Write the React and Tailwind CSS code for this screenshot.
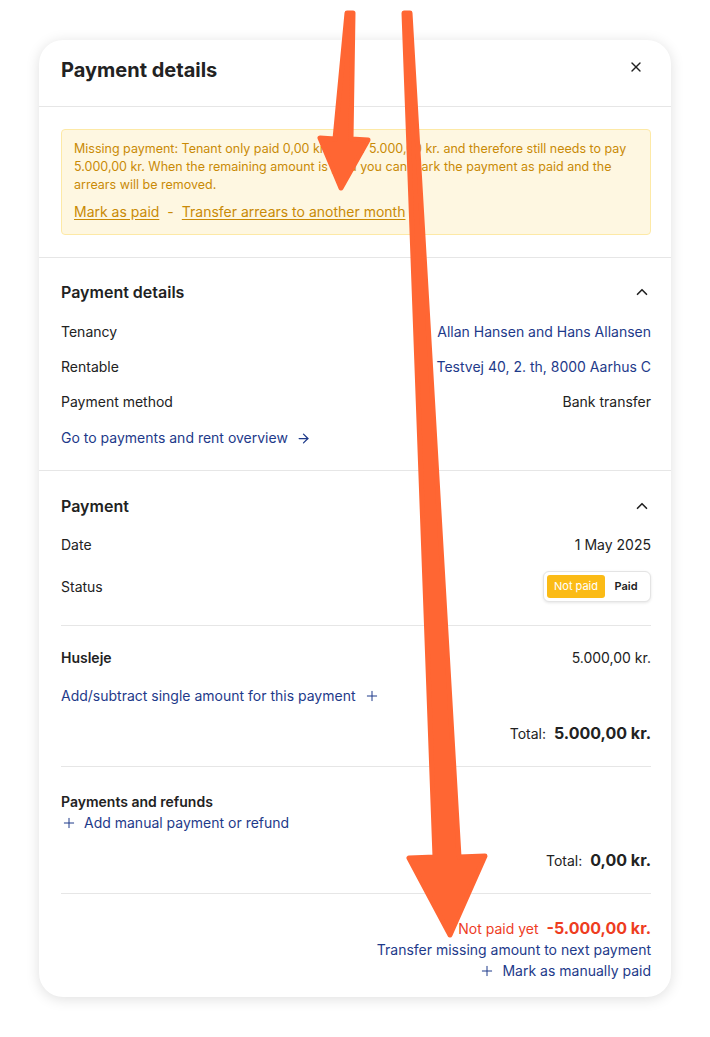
import React from 'react';
import { X, ChevronUp, ArrowRight, Plus } from 'lucide-react';

const BLUE = 'text-[#1e3a8a]';

const Row = ({ label, children }) => (
    <div className="flex justify-between items-center h-5">
        <span className="text-[#222]">{label}</span>
        {children}
    </div>
);

const Arrows = () => (
    <svg className="absolute inset-0 pointer-events-none" width="710" height="1037" viewBox="0 0 710 1037">
        <g fill="#ff6633" stroke="#ff6633" strokeWidth="5" strokeLinejoin="round">
            {/* short arrow */}
            <polygon points="347,13 353,13 351,139 368,140 341,188 320,138 335,139" />
            {/* long arrow */}
            <polygon points="404,13 410,13 459,857 485,856 450,935 409,858 435,857" />
        </g>
    </svg>
);

export default function App() {
    return (
        <div className="relative min-h-[1037px] bg-white pt-10" style={{ fontFamily: 'Inter, "Noto Sans", sans-serif' }}>
            <div className="mx-auto w-[632px] bg-white rounded-[24px] shadow-[0_2px_14px_rgba(0,0,0,0.13)] overflow-hidden text-sm">
                {/* Header */}
                <div className="h-[67px] pl-[22px] pr-5 pt-4 flex items-start justify-between border-b border-[#e6e6e6]">
                    <h1 className="text-[20px] leading-7 font-bold text-[#222]">Payment details</h1>
                    <X size={16} strokeWidth={2} className="text-[#222] mt-[3px] mr-[7px]" />
                </div>

                {/* Alert */}
                <div className="pl-[22px] pr-5 pt-[22px] pb-[22px] border-b border-[#e6e6e6]">
                    <div className="bg-[#fef7e1] border border-[#fde9a6] rounded px-3 pt-[10px] pb-[13px] text-[12.5px] leading-[18px] text-[#c98a06]">
                        <p>
                            Missing payment: Tenant only paid 0,00 kr. out of 5.000,00 kr. and therefore still needs to pay
                            5.000,00 kr. When the remaining amount is paid you can mark the payment as paid and the
                            arrears will be removed.
                        </p>
                        <div className="mt-[9px] text-[14px] leading-[18px] flex items-center gap-2">
                            <span className="underline underline-offset-2">Mark as paid</span>
                            <span>-</span>
                            <span className="underline underline-offset-2">Transfer arrears to another month</span>
                        </div>
                    </div>
                </div>

                {/* Payment details section */}
                <div className="pl-[22px] pr-5 pt-[22px] pb-[22px] border-b border-[#e6e6e6]">
                    <div className="flex justify-between items-center h-6 mb-[18px]">
                        <h2 className="text-base font-semibold text-[#222]">Payment details</h2>
                        <ChevronUp size={18} strokeWidth={2.2} className="text-[#222]" />
                    </div>
                    <div className="flex flex-col gap-[15px]">
                        <Row label="Tenancy"><span className={BLUE}>Allan Hansen and Hans Allansen</span></Row>
                        <Row label="Rentable"><span className={BLUE}>Testvej 40, 2. th, 8000 Aarhus C</span></Row>
                        <Row label="Payment method"><span className="text-[#222]">Bank transfer</span></Row>
                        <div className={`flex items-center gap-2 h-5 mt-[1px] ${BLUE}`}>
                            Go to payments and rent overview <ArrowRight size={15} strokeWidth={2} />
                        </div>
                    </div>
                </div>

                {/* Payment section */}
                <div className="pl-[22px] pr-5 pt-[23px] pb-4">
                    <div className="flex justify-between items-center h-6 mb-[17px]">
                        <h2 className="text-base font-semibold text-[#222]">Payment</h2>
                        <ChevronUp size={18} strokeWidth={2.2} className="text-[#222]" />
                    </div>
                    <Row label="Date"><span className="text-[#222]">1 May 2025</span></Row>
                    <div className="flex justify-between items-center mt-4">
                        <span className="text-[#222]">Status</span>
                        <div className="flex items-center h-[31px] p-[3px] rounded-md border border-[#e4e4e4] bg-white shadow-[0_1px_3px_rgba(0,0,0,0.1)] text-[11px]">
                            <span className="h-full w-[58px] flex items-center justify-center rounded-[3px] bg-[#fbbb16] text-white">Not paid</span>
                            <span className="h-full w-[42px] flex items-center justify-center font-semibold text-[#222]">Paid</span>
                        </div>
                    </div>

                    <div className="border-t border-[#e6e6e6] mt-[23px] pt-[22px] pb-[23px]">
                        <div className="flex justify-between items-center h-5">
                            <span className="font-semibold text-[#222]">Husleje</span>
                            <span className="text-[#222]">5.000,00 kr.</span>
                        </div>
                        <div className={`flex items-center gap-2 h-5 mt-[18px] ${BLUE}`}>
                            Add/subtract single amount for this payment <Plus size={16} strokeWidth={1.5} />
                        </div>
                        <div className="flex justify-end items-baseline gap-2 mt-[15px] h-[22px] text-[#222]">
                            <span>Total:</span>
                            <span className="text-base font-bold">5.000,00 kr.</span>
                        </div>
                    </div>

                    <div className="border-t border-[#e6e6e6] pt-[25px] pb-[23px]">
                        <div className="font-semibold text-[#222] h-5 flex items-center">Payments and refunds</div>
                        <div className={`flex items-center gap-[7px] h-5 mt-[1px] ${BLUE}`}>
                            <Plus size={16} strokeWidth={1.5} /> Add manual payment or refund
                        </div>
                        <div className="flex justify-end items-baseline gap-2 mt-[15px] h-[22px] text-[#222]">
                            <span>Total:</span>
                            <span className="text-base font-bold">0,00 kr.</span>
                        </div>
                    </div>

                    <div className="border-t border-[#e6e6e6] pt-[22px] flex flex-col items-end">
                        <div className="flex items-baseline gap-2 h-[22px] text-[#ee3d1f]">
                            <span>Not paid yet</span>
                            <span className="text-base font-bold">-5.000,00 kr.</span>
                        </div>
                        <div className={`h-5 mt-[2px] flex items-center ${BLUE}`}>Transfer missing amount to next payment</div>
                        <div className={`h-5 mt-[1px] flex items-center gap-[7px] ${BLUE}`}>
                            <Plus size={16} strokeWidth={1.5} /> Mark as manually paid
                        </div>
                    </div>
                </div>
            </div>
            <Arrows />
        </div>
    );
}
